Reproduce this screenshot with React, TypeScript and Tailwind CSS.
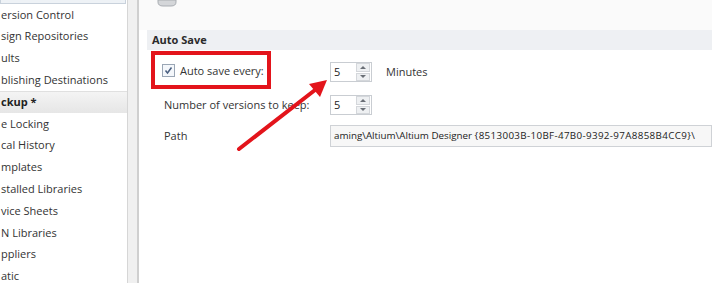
import React from "react";

const items: { t: string; sel?: boolean }[] = [
  { t: "ersion Control" },
  { t: "sign Repositories" },
  { t: "ults" },
  { t: "blishing Destinations" },
  { t: "ckup *", sel: true },
  { t: "e Locking" },
  { t: "cal History" },
  { t: "mplates" },
  { t: "stalled Libraries" },
  { t: "vice Sheets" },
  { t: "N Libraries" },
  { t: "ppliers" },
  { t: "atic" },
];

function Spinner() {
  return (
    <div className="w-[42px] h-[20px] border border-[#c9cdd2] bg-white flex items-center">
      <span className="pl-[3px] flex-1 text-[#222]">5</span>
      <div className="w-[14px] h-[18px] mr-[1px] flex flex-col gap-[1px]">
        <div className="flex-1 bg-[#eef0f2] border border-[#d4d7db] flex items-center justify-center">
          <svg width="6" height="3" viewBox="0 0 6 3"><path d="M0 3 L3 0 L6 3 Z" fill="#6a6f76" /></svg>
        </div>
        <div className="flex-1 bg-[#eef0f2] border border-[#d4d7db] flex items-center justify-center">
          <svg width="6" height="3" viewBox="0 0 6 3"><path d="M0 0 L3 3 L6 0 Z" fill="#6a6f76" /></svg>
        </div>
      </div>
    </div>
  );
}

export default function App() {
  return (
    <div
      className="w-[712px] h-[283px] flex bg-white overflow-hidden relative text-[11px] text-[#333]"
      style={{ fontFamily: '"Open Sans", "Noto Sans", sans-serif' }}
    >
      {/* left tree */}
      <div className="w-[128px] shrink-0 border-r border-[#d6d6d6] overflow-hidden">
        <div className="mt-[-17.8px] flex flex-col">
          <div className="h-[21.8px] bg-[#eef2f6] border border-[#c9d2dc] mr-[1px]" />
          {items.map((it, i) => (
            <div
              key={i}
              className={
                "h-[21.8px] flex items-center whitespace-nowrap " +
                (it.sel
                  ? "bg-gradient-to-b from-[#f4f4f4] to-[#e6e6e6] border-t border-[#e0e0e0] font-bold text-[#222]"
                  : "")
              }
            >
              <span className="pl-[1px]">{it.t}</span>
            </div>
          ))}
        </div>
      </div>
      {/* splitter */}
      <div className="w-[11px] shrink-0 bg-[#f0f0f0] border-r-2 border-[#cfcfcf]" />
      {/* right panel */}
      <div className="flex-1 flex flex-col min-w-0">
        <div className="h-[30px] bg-[#fafafa] pl-[18px]">
          <svg width="20" height="8" viewBox="0 0 20 8">
            <path d="M1 0 L1 2 Q1 6 6 6 L14 6 Q19 6 19 2 L19 0 Z" fill="#d4d6d9" stroke="#a9adb2" strokeWidth="1" />
          </svg>
        </div>
        <div className="ml-[8px] h-[20px] bg-[#eef0f3] flex items-center pl-[5px] font-bold text-[#2b2b2b]">
          Auto Save
        </div>
        {/* row 1 */}
        <div className="mt-[1px] ml-[12px] flex h-[38px]">
          <div className="w-[179px] shrink-0">
            <div className="w-[120px] h-[38px] border-[4px] border-[#e3141b] flex items-center pl-[7px]">
              <div className="w-[13px] h-[13px] border border-[#9aa6b5] bg-[#f4f7fb] flex items-center justify-center">
                <svg width="9" height="9" viewBox="0 0 9 9">
                  <path d="M1.5 4.5 L3.5 7 L7.5 1.5" fill="none" stroke="#4a5f80" strokeWidth="1.5" />
                </svg>
              </div>
              <span className="ml-[5px] mt-[3px] whitespace-nowrap">Auto save every:</span>
            </div>
          </div>
          <div className="mt-[11px] flex items-center h-[20px]">
            <Spinner />
            <span className="ml-[14px]">Minutes</span>
          </div>
        </div>
        {/* row 2 */}
        <div className="mt-[6px] ml-[12px] flex h-[20px] items-center">
          <div className="w-[179px] shrink-0 pl-[13px] whitespace-nowrap">Number of versions to keep:</div>
          <Spinner />
        </div>
        {/* row 3 */}
        <div className="mt-[10px] ml-[12px] flex h-[22px] items-center">
          <div className="w-[179px] shrink-0 pl-[13px]">Path</div>
          <div className="flex-1 min-w-0 h-[22px] border border-[#cfd2d6] bg-[#f7f7f7] flex items-center pl-[3px] overflow-hidden whitespace-nowrap text-[9.8px] text-[#222]">
            <span>
              {"aming\\Altium\\Altium Designer "}
              <span className="tracking-[0.35px]">{"{8513003B-10BF-47B0-9392-97A8858B4CC9}\\"}</span>
            </span>
          </div>
        </div>
      </div>
      {/* red arrow overlay */}
      <svg className="absolute inset-0 pointer-events-none" width="712" height="283" viewBox="0 0 712 283">
        <line x1="239" y1="149" x2="315" y2="90" stroke="#e3141b" strokeWidth="4" strokeLinecap="round" />
        <polygon points="327,80 320,97 309,84" fill="#e3141b" />
      </svg>
    </div>
  );
}
